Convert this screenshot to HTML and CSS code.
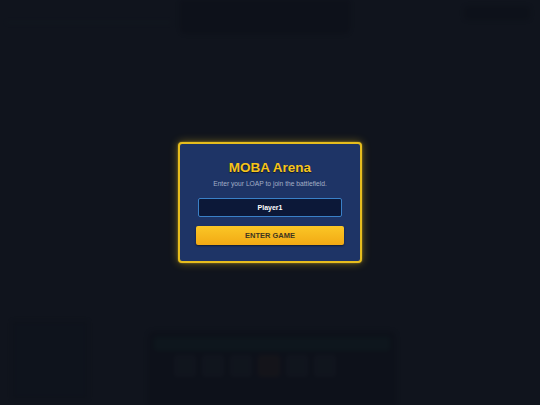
FILE: index.html
```html
<!DOCTYPE html>
<html>
<head>
<meta charset="utf-8">
<link rel="stylesheet" href="styles.css">
</head>
<body>
<div class="game">
  <div class="topbar">
    <div class="top-left"></div>
    <div class="score"></div>
    <div class="spacer"></div>
    <div class="top-right"></div>
  </div>
  <div class="field"></div>
  <div class="bottom">
    <div class="minimap"></div>
    <div class="abilities">
      <div class="hp"></div>
      <div class="slots">
        <span class="slot"></span><span class="slot"></span><span class="slot"></span><span class="slot red"></span><span class="slot"></span><span class="slot"></span>
      </div>
    </div>
  </div>
</div>
<div class="overlay">
  <div class="card">
    <h1 class="title">MOBA Arena</h1>
    <p class="subtitle">Enter your LOAP to join the battlefield.</p>
    <div class="input">Player1</div>
    <button class="btn">ENTER GAME</button>
  </div>
</div>
</body>
</html>
```

FILE: styles.css
```css
html, body {
  margin: 0;
  padding: 0;
  width: 540px;
  height: 405px;
  overflow: hidden;
  background: #10141d;
  font-family: "Liberation Sans", Arial, sans-serif;
}
.game {
  width: 540px;
  height: 405px;
  display: flex;
  flex-direction: column;
  filter: blur(2px);
  opacity: 0.4;
}
.topbar {
  height: 34px;
  display: flex;
  align-items: flex-start;
}
.top-left {
  width: 166px;
  height: 20px;
  margin: 2px 8px 0 6px;
  border-bottom: 1px solid #16262a;
}
.score {
  width: 170px;
  height: 34px;
  background: #0a0d16;
  border-radius: 0 0 6px 6px;
}
.spacer { flex: 1; }
.top-right {
  width: 66px;
  height: 14px;
  margin: 6px 10px 0 0;
  background: #0a0e16;
  border-radius: 4px;
}
.field { flex: 1; }
.bottom {
  height: 90px;
  display: flex;
  align-items: flex-end;
  gap: 60px;
  padding-left: 12px;
}
.minimap {
  width: 72px;
  height: 74px;
  margin-bottom: 6px;
  background: #0d121b;
  border: 2px solid #0b0f17;
}
.abilities {
  width: 236px;
  height: 62px;
  background: #0a0d16;
  border-radius: 6px 6px 0 0;
  padding: 6px;
  display: flex;
  flex-direction: column;
  gap: 4px;
}
.hp {
  height: 14px;
  background: #0c1a1d;
  border-radius: 3px;
}
.slots {
  display: flex;
  gap: 6px;
  padding: 0 20px;
}
.slot {
  width: 22px;
  height: 22px;
  background: #12171f;
  border-radius: 3px;
}
.slot.red { background: #1c1616; }

.overlay {
  position: absolute;
  inset: 0;
  display: flex;
  align-items: center;
  justify-content: center;
}
.card {
  box-sizing: border-box;
  width: 184px;
  padding: 16px;
  background: #1e3466;
  border: 2px solid #e6bd1e;
  border-radius: 4px;
  box-shadow: 0 0 8px rgba(230, 190, 30, 0.45), 0 0 2px rgba(230,190,30,0.6);
  display: flex;
  flex-direction: column;
  align-items: stretch;
  text-align: center;
}
.title {
  margin: 0;
  font-size: 13.5px;
  line-height: 15px;
  font-weight: bold;
  color: #f6c41a;
  text-shadow: 0 1px 1px rgba(0,0,0,0.6);
}
.subtitle {
  margin: 5px 0 0;
  font-size: 6.7px;
  line-height: 8px;
  color: #a3afc6;
}
.input {
  box-sizing: border-box;
  height: 19px;
  margin: 10px 2px 0;
  background: #0c1838;
  border: 1px solid #3a80c8;
  border-radius: 2px;
  color: #ffffff;
  font-weight: bold;
  font-size: 7px;
  line-height: 17px;
}
.btn {
  box-sizing: border-box;
  height: 19px;
  margin: 9px 0 0;
  padding: 0;
  border: none;
  border-radius: 2px;
  background: linear-gradient(#fbc726, #f2a914);
  box-shadow: 0 1px 2px rgba(0,0,0,0.5);
  color: #3f3620;
  font-family: "Liberation Sans", Arial, sans-serif;
  font-weight: bold;
  font-size: 7.5px;
  line-height: 19px;
}
```
